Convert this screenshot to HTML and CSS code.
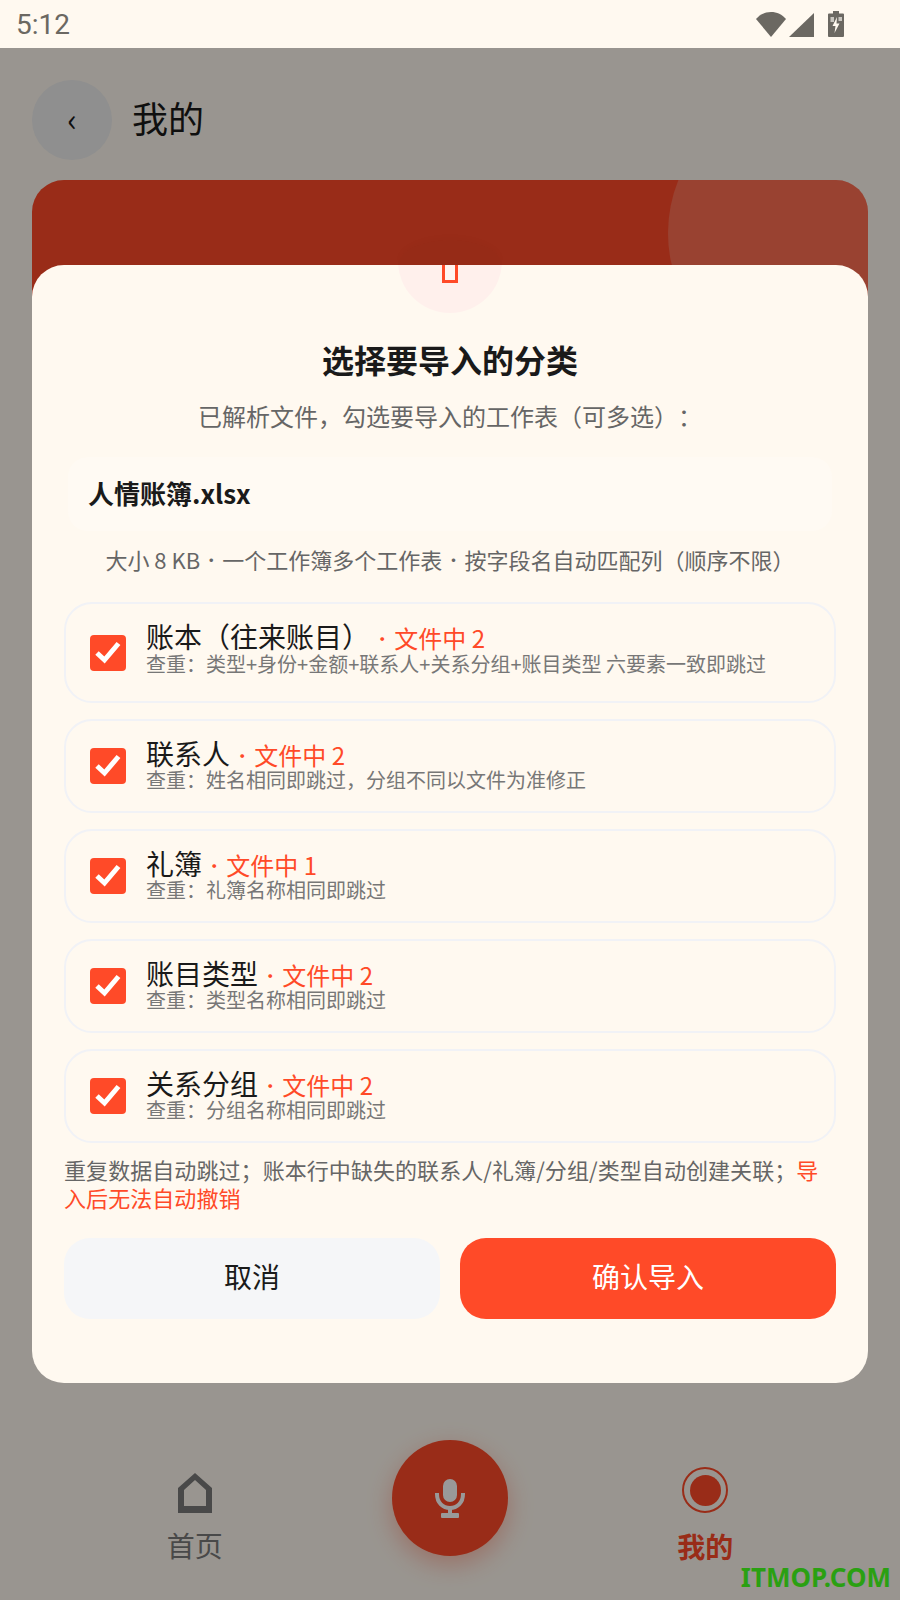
FILE: index.html
```html
<!DOCTYPE html>
<html lang="zh-CN">
<head>
    <meta charset="UTF-8">
    <meta name="viewport" content="width=device-width, initial-scale=1.0">
    <title>我的</title>
    <link rel="stylesheet" href="styles.css">
</head>
<body>
    <div class="statusbar">
        <span class="time">5:12</span>
        <div class="status-icons">
            <svg class="ic-wifi" width="30" height="25" viewBox="0 0 30 25"><path d="M0 7C4 2.500 9 0 15 0s11 2.500 15 7L15 25z"/></svg>
            <svg class="ic-signal" width="25" height="24" viewBox="0 0 25 24"><path d="M25 0V24H0z"/></svg>
            <svg class="ic-battery" width="16" height="26" viewBox="0 0 16 26">
                <path d="M5 0h6v2.500h4a1 1 0 0 1 1 1V25a1 1 0 0 1-1 1H1a1 1 0 0 1-1-1V3.500a1 1 0 0 1 1-1h4z"/>
                <path class="cell" d="M2.500 6H6V11H2.500zM10.500 6H14V10H10.500z"/>
                <path class="bolt" d="M9 6 4.500 15H7.500L6.500 22 11.500 12.500H8.500z"/>
            </svg>
        </div>
    </div>

    <div class="page">
        <header class="topbar">
            <div class="back">‹</div>
            <h1>我的</h1>
        </header>

        <div class="profile-card"><div class="card-circle"></div></div>

        <nav class="bottomnav">
            <div class="nav-item">
                <svg width="34" height="40" viewBox="0 0 34 40"><path fill-rule="evenodd" fill="#7a7a7a" d="M17 0 34 15V40H0V15zM17 7 6 17V33H28V17z"/></svg>
                <span>首页</span>
            </div>
            <div class="mic-btn">
                <svg width="30" height="39" viewBox="0 0 30 39">
                    <rect x="8" y="0" width="14" height="23" rx="7" fill="#fff"/>
                    <path d="M2 14V15C2 24 8 29 15 29S28 24 28 15V14" fill="none" stroke="#fff" stroke-width="4"/>
                    <rect x="13" y="29" width="4" height="6" fill="#fff"/>
                    <rect x="6" y="34" width="18" height="5" rx="1" fill="#fff"/>
                </svg>
            </div>
            <div class="nav-item active">
                <div class="mine-icon"><div></div></div>
                <span>我的</span>
            </div>
        </nav>

        <div class="overlay">
            <div class="modal">
                <div class="badge"><div class="tofu"></div></div>
                <h2>选择要导入的分类</h2>
                <p class="subtitle">已解析文件，勾选要导入的工作表（可多选）：</p>
                <div class="filebox">人情账簿.xlsx</div>
                <p class="meta">大小 8 KB <span class="dot">·</span> 一个工作簿多个工作表 <span class="dot">·</span> 按字段名自动匹配列（顺序不限）</p>

                <div class="rows">
                    <label class="row row-first">
                        <span class="check"><svg width="36" height="36" viewBox="0 0 36 36"><path d="M7 18 14.500 25 28.500 8.500" fill="none" stroke="#fff" stroke-width="5"/></svg></span>
                        <span class="row-text">
                            <span class="row-title">账本（往来账目）<em> <span class="dot">·</span> 文件中 2</em></span>
                            <span class="row-sub">查重：类型+身份+金额+联系人+关系分组+账目类型 六要素一致即跳过</span>
                        </span>
                    </label>
                    <label class="row">
                        <span class="check"><svg width="36" height="36" viewBox="0 0 36 36"><path d="M7 18 14.500 25 28.500 8.500" fill="none" stroke="#fff" stroke-width="5"/></svg></span>
                        <span class="row-text">
                            <span class="row-title">联系人<em> <span class="dot">·</span> 文件中 2</em></span>
                            <span class="row-sub">查重：姓名相同即跳过，分组不同以文件为准修正</span>
                        </span>
                    </label>
                    <label class="row">
                        <span class="check"><svg width="36" height="36" viewBox="0 0 36 36"><path d="M7 18 14.500 25 28.500 8.500" fill="none" stroke="#fff" stroke-width="5"/></svg></span>
                        <span class="row-text">
                            <span class="row-title">礼簿<em> <span class="dot">·</span> 文件中 1</em></span>
                            <span class="row-sub">查重：礼簿名称相同即跳过</span>
                        </span>
                    </label>
                    <label class="row">
                        <span class="check"><svg width="36" height="36" viewBox="0 0 36 36"><path d="M7 18 14.500 25 28.500 8.500" fill="none" stroke="#fff" stroke-width="5"/></svg></span>
                        <span class="row-text">
                            <span class="row-title">账目类型<em> <span class="dot">·</span> 文件中 2</em></span>
                            <span class="row-sub">查重：类型名称相同即跳过</span>
                        </span>
                    </label>
                    <label class="row">
                        <span class="check"><svg width="36" height="36" viewBox="0 0 36 36"><path d="M7 18 14.500 25 28.500 8.500" fill="none" stroke="#fff" stroke-width="5"/></svg></span>
                        <span class="row-text">
                            <span class="row-title">关系分组<em> <span class="dot">·</span> 文件中 2</em></span>
                            <span class="row-sub">查重：分组名称相同即跳过</span>
                        </span>
                    </label>
                </div>

                <p class="note">重复数据自动跳过；账本行中缺失的联系人/礼簿/分组/类型自动创建关联；<em>导入后无法自动撤销</em></p>

                <div class="actions">
                    <button class="btn btn-cancel">取消</button>
                    <button class="btn btn-ok">确认导入</button>
                </div>
            </div>
        </div>
    </div>

    <div class="watermark">ITMOP.COM</div>
</body>
</html>
```

FILE: styles.css
```css
* {
    box-sizing: border-box;
}

body {
    margin: 0;
    width: 900px;
    height: 1600px;
    overflow: hidden;
    position: relative;
    background-color: #fff9f0;
    color: #1a1a1a;
    font-family: "Noto Sans CJK SC", "Noto Sans", sans-serif;
    text-spacing-trim: space-all;
}

.statusbar {
    height: 48px;
    padding: 0 56px 0 16px;
    display: flex;
    align-items: center;
    justify-content: space-between;
    background-color: #fff9f0;
}

.time {
    font-family: Roboto, sans-serif;
    font-size: 28px;
    color: #6b6862;
}

.status-icons {
    display: flex;
    align-items: flex-end;
    gap: 3px;
    height: 26px;
}

.status-icons svg {
    fill: #6b6862;
}

.ic-battery {
    margin-left: 11px;
}

.ic-battery .bolt {
    fill: #fff9f0;
}

.ic-battery .cell {
    fill: #c9c6c0;
}

.page {
    height: 1552px;
    position: relative;
    display: flex;
    flex-direction: column;
}

.topbar {
    display: flex;
    align-items: center;
    gap: 20px;
    padding: 32px 32px 20px;
}

.back {
    width: 80px;
    height: 80px;
    padding-bottom: 4px;
    border-radius: 50%;
    background-color: #eeeeee;
    display: flex;
    align-items: center;
    justify-content: center;
    font-size: 32px;
    line-height: 1;
}

.topbar h1 {
    margin: 0;
    padding-bottom: 6px;
    font-size: 36px;
    font-weight: 400;
}

.profile-card {
    margin: 0 32px;
    height: 260px;
    border-radius: 32px;
    background-color: #ff4a28;
    position: relative;
    overflow: hidden;
}

.card-circle {
    position: absolute;
    left: 636px;
    top: -87px;
    width: 280px;
    height: 280px;
    border-radius: 50%;
    background-color: rgba(255, 255, 255, 0.2);
}

.bottomnav {
    margin-top: auto;
    padding: 0 67px 35px;
    display: grid;
    grid-template-columns: 1fr 1fr 1fr;
    align-items: end;
    justify-items: center;
}

.nav-item {
    display: flex;
    flex-direction: column;
    align-items: center;
    gap: 12px;
    font-size: 28px;
    line-height: 40px;
    color: #7a7a7a;
}

.nav-item.active {
    margin-bottom: -1px;
    gap: 13px;
    color: #ff4a28;
    font-weight: 700;
}

.mine-icon {
    width: 46px;
    height: 46px;
    border: 2px solid #ff4a28;
    border-radius: 50%;
    display: flex;
    align-items: center;
    justify-content: center;
}

.mine-icon div {
    width: 31px;
    height: 31px;
    border-radius: 50%;
    background-color: #ff4a28;
}

.mic-btn {
    width: 116px;
    height: 116px;
    margin-bottom: 9px;
    border-radius: 50%;
    background-color: #ff4a28;
    box-shadow: 0 8px 24px rgba(255, 74, 40, 0.35);
    display: flex;
    align-items: center;
    justify-content: center;
}

.overlay {
    position: absolute;
    inset: 0;
    background-color: rgba(0, 0, 0, 0.4);
    padding: 217px 32px 0;
}

/* faint edge of the badge that shows above the sheet */
.overlay::before {
    content: "";
    position: absolute;
    left: 398px;
    top: 192px;
    width: 104px;
    height: 25px;
    border-radius: 52px 52px 0 0 / 25px 25px 0 0;
    background-color: rgba(0, 0, 0, 0.02);
    box-shadow: 0 -3px 8px rgba(0, 0, 0, 0.015);
}

.modal {
    position: relative;
    height: 1118px;
    padding: 0 32px;
    border-radius: 32px;
    background-color: #fff9f0;
    overflow: hidden;
}

.badge {
    width: 104px;
    height: 104px;
    margin: -56px auto 0;
    border-radius: 50%;
    background-color: #fff0ec;
    display: flex;
    align-items: center;
    justify-content: center;
}

.tofu {
    width: 16px;
    height: 44px;
    border: 3px solid #ff4a28;
    background-color: #fff5f1;
}

.modal h2 {
    margin: 24px 0 0;
    font-size: 32px;
    line-height: 44px;
    font-weight: 700;
    text-align: center;
}

.subtitle {
    margin: 18px 0 0;
    font-size: 24px;
    line-height: 34px;
    color: #666666;
    text-align: center;
}

.filebox {
    margin: 24px 4px 0;
    padding: 0 20px;
    height: 74px;
    border-radius: 20px;
    background-color: #fffaf3;
    font-size: 26px;
    line-height: 72px;
    font-weight: 700;
}

.meta {
    margin: 13px 0 0;
    font-size: 22px;
    line-height: 30px;
    color: #666666;
    text-align: center;
}

.dot {
    display: inline-block;
    width: 0.75em;
    font-size: 0.75em;
    line-height: 0;
    text-indent: -0.125em;
    vertical-align: 0.1em;
    white-space: nowrap;
}

.rows {
    margin-top: 28px;
    display: flex;
    flex-direction: column;
    gap: 16px;
}

.row {
    display: flex;
    align-items: center;
    gap: 20px;
    padding: 18px 24px;
    border: 2px solid #f1f2f6;
    border-radius: 28px;
}

.check {
    flex: none;
    width: 36px;
    height: 36px;
    border-radius: 4px;
    background-color: #ff4a28;
    display: block;
}

.check svg {
    display: block;
}

.row-text {
    display: flex;
    flex-direction: column;
    padding-bottom: 4px;
}

.row-first .row-text {
    padding-bottom: 10px;
}

.row-title {
    height: 32px;
    font-size: 28px;
    line-height: 28px;
}

.row-first .row-title {
    height: 33px;
}

.row-title em {
    font-style: normal;
    font-size: 24px;
    line-height: 1;
    color: #ff4a28;
}

.row-sub {
    font-size: 20px;
    line-height: 18px;
    color: #777777;
}

.note {
    margin: 12px 0 0;
    font-size: 22px;
    line-height: 28px;
    letter-spacing: 0.07px;
    color: #666666;
}

.note em {
    font-style: normal;
    color: #ff4a28;
}

.actions {
    margin-top: 27px;
    display: flex;
    gap: 20px;
}

.btn {
    flex: 1;
    height: 81px;
    padding: 0 0 5px;
    border: none;
    border-radius: 26px;
    font-family: inherit;
    font-size: 28px;
}

.btn-cancel {
    background-color: #f5f6f8;
    color: #1a1a1a;
}

.btn-ok {
    background-color: #ff4a28;
    color: #ffffff;
}

.watermark {
    position: absolute;
    right: 9px;
    bottom: 5px;
    font-family: "Noto Sans", sans-serif;
    font-size: 26px;
    line-height: 36px;
    font-weight: 700;
    color: #2aa012;
}
```
